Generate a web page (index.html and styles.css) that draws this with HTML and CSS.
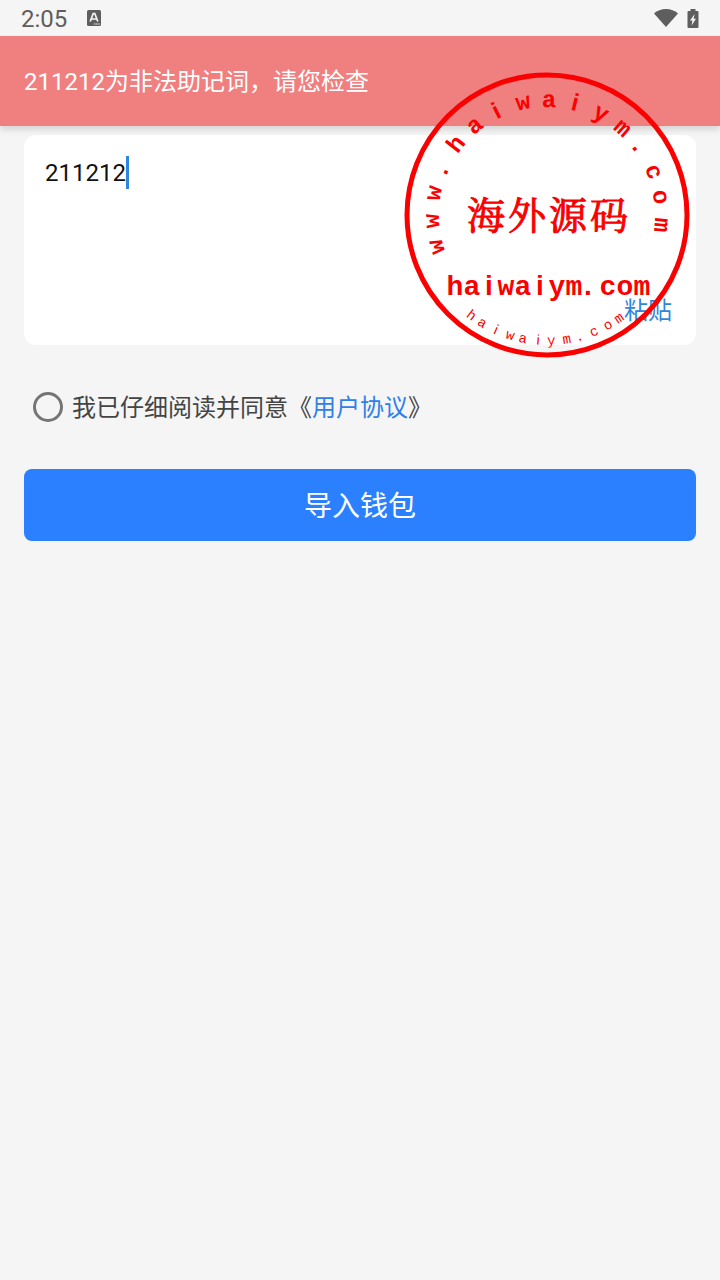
FILE: index.html
```html
<!DOCTYPE html>
<html lang="zh-CN">
<head>
    <meta charset="UTF-8">
    <meta name="viewport" content="width=device-width, initial-scale=1.0">
    <title>导入钱包</title>
    <link rel="stylesheet" href="styles.css">
</head>
<body>
    <header class="status-bar">
        <span class="time">2:05</span>
        <svg class="icon-input" viewBox="0 0 14 16">
            <rect width="14" height="16" rx="1.5" fill="#5e5e5e"/>
            <path d="M3.2 11.5 L6.2 3.5 H7.8 L10.8 11.5 M4.8 9 H9.2" fill="none" stroke="#f5f5f5" stroke-width="1.7"/>
            <path d="M7 14 H13" stroke="#f5f5f5" stroke-width="1.2" stroke-dasharray="1.5 .6"/>
        </svg>
        <div class="status-right">
            <svg class="icon-wifi" viewBox="0 0 24 18">
                <path d="M12 18 L0 4.5 C6 -1.5 18 -1.5 24 4.5 Z" fill="#5e5e5e"/>
            </svg>
            <svg class="icon-battery" viewBox="0 0 12 19">
                <path d="M3.5 0 H8.5 V2 H10.5 Q11.5 2 11.5 3 V18 Q11.5 19 10.5 19 H1.5 Q0.5 19 0.5 18 V3 Q0.5 2 1.5 2 H3.5 Z" fill="#5e5e5e"/>
                <path d="M7.6 5 L3 11.5 H5.4 L4.6 16.5 L9 9.8 H6.6 Z" fill="#f5f5f5"/>
            </svg>
        </div>
    </header>

    <div class="toast" role="alert">211212为非法助记词，请您检查</div>

    <main class="content">
        <div class="card">
            <textarea class="words" aria-label="助记词" spellcheck="false">211212</textarea>
            <span class="caret"></span>
            <button class="paste" type="button">粘贴</button>
        </div>

        <div class="agreement">
            <input type="radio" id="agree">
            <div class="terms"><label for="agree">我已仔细阅读并同意《</label><a href="#">用户协议</a>》</div>
        </div>

        <button class="import" type="button">导入钱包</button>
    </main>

    <svg class="stamp" viewBox="-143 -143 286 286">
        <circle r="140" fill="none" stroke="#fa0000" stroke-width="5"/>
        <g class="ring-top">
            <text y="-108" transform="rotate(-106)">w</text>
            <text y="-108" transform="rotate(-93)">w</text>
            <text y="-108" transform="rotate(-79)">w</text>
            <text y="-108" transform="rotate(-67)">.</text>
            <text y="-108" transform="rotate(-52)">h</text>
            <text y="-108" transform="rotate(-39)">a</text>
            <text y="-108" transform="rotate(-26)" class="narrow">i</text>
            <text y="-108" transform="rotate(-12)">w</text>
            <text y="-108" transform="rotate(1)">a</text>
            <text y="-108" transform="rotate(14)" class="narrow">i</text>
            <text y="-108" transform="rotate(28)">y</text>
            <text y="-108" transform="rotate(41)">m</text>
            <text y="-108" transform="rotate(53)">.</text>
            <text y="-108" transform="rotate(68)">c</text>
            <text y="-108" transform="rotate(81)">o</text>
            <text y="-108" transform="rotate(95)">m</text>
        </g>
        <text class="stamp-name" x="-61 -20 21 62" y="14">海外源码</text>
        <text class="stamp-site" x="-92 -75 -58 -41 -24 -7 10 27 41 61 78 95" y="80">ha<tspan class="narrow">i</tspan>wa<tspan class="narrow">i</tspan>ym.com</text>
        <g class="ring-bottom">
            <text y="130" transform="rotate(37)">h</text>
            <text y="130" transform="rotate(31)">a</text>
            <text y="130" transform="rotate(24)" class="narrow">i</text>
            <text y="130" transform="rotate(17)">w</text>
            <text y="130" transform="rotate(11)">a</text>
            <text y="130" transform="rotate(4)" class="narrow">i</text>
            <text y="130" transform="rotate(-2)">y</text>
            <text y="130" transform="rotate(-9)">m</text>
            <text y="130" transform="rotate(-15)">.</text>
            <text y="130" transform="rotate(-22)">c</text>
            <text y="130" transform="rotate(-29)">o</text>
            <text y="130" transform="rotate(-35)">m</text>
        </g>
    </svg>
</body>
</html>
```
FILE: styles.css
```css
* {
    margin: 0;
    padding: 0;
    box-sizing: border-box;
}

body {
    position: relative;
    min-height: 100vh;
    background: #f5f5f5;
    color: #444;
    font-family: Roboto, "Noto Sans CJK SC", sans-serif;
    font-size: 24px;
    line-height: 36px;
}

button,
textarea {
    border: none;
    background: none;
    font: inherit;
}

.status-bar {
    display: flex;
    align-items: center;
    height: 36px;
    padding: 0 21px;
    color: #5e5e5e;
}

.time {
    padding-top: 2px;
}

.icon-input {
    width: 14px;
    height: 16px;
    margin-left: 20px;
}

.status-right {
    display: flex;
    align-items: center;
    gap: 9px;
    margin-left: auto;
}

.icon-wifi {
    width: 24px;
    height: 18px;
}

.icon-battery {
    width: 12px;
    height: 19px;
}

.toast {
    padding: 28px 24px 26px;
    background: #f08080;
    color: #fff;
    box-shadow: 0 4px 6px rgba(0, 0, 0, 0.12);
}

.content {
    padding: 9px 24px;
}

.card {
    position: relative;
    display: flex;
    flex-direction: column;
    padding: 20px 21px 16px;
    border-radius: 12px;
    background: #fff;
}

.words {
    width: 100%;
    height: 138px;
    color: #111;
    resize: none;
    outline: none;
}

.caret {
    position: absolute;
    top: 21px;
    left: 102px;
    width: 3px;
    height: 33px;
    background: #2f86dc;
}

.paste {
    align-self: flex-end;
    padding: 0 3px;
    color: #2f86dc;
    cursor: pointer;
}

.agreement {
    display: flex;
    align-items: center;
    gap: 9px;
    margin: 43px 0;
    padding-left: 9px;
}

.agreement input {
    width: 30px;
    height: 30px;
    border: 3px solid #757575;
    border-radius: 50%;
    appearance: none;
}

.agreement input:checked {
    background: #2a80ff;
}

.terms {
    padding-top: 2px;
}

.agreement a {
    color: #2f80ea;
    text-decoration: none;
}

.import {
    width: 100%;
    height: 72px;
    padding-top: 4px;
    border-radius: 8px;
    background: #2a80ff;
    color: #fff;
    font-size: 28px;
    cursor: pointer;
}

.stamp {
    position: absolute;
    top: 72px;
    right: 30px;
    width: 286px;
    height: 286px;
    fill: #fa0000;
    font-family: "Liberation Mono", monospace;
    text-anchor: middle;
    pointer-events: none;
}

.ring-top {
    font-size: 24px;
    font-weight: 700;
}

.ring-bottom {
    font-size: 14px;
}

.stamp-name {
    font-family: KaiTi, "Noto Serif CJK SC", "Noto Sans CJK SC", serif;
    font-size: 38px;
    stroke: #fa0000;
    stroke-width: 1px;
}

.stamp-site {
    font-size: 28px;
    font-weight: 700;
}

.narrow {
    font-family: "Liberation Sans", sans-serif;
}
```
